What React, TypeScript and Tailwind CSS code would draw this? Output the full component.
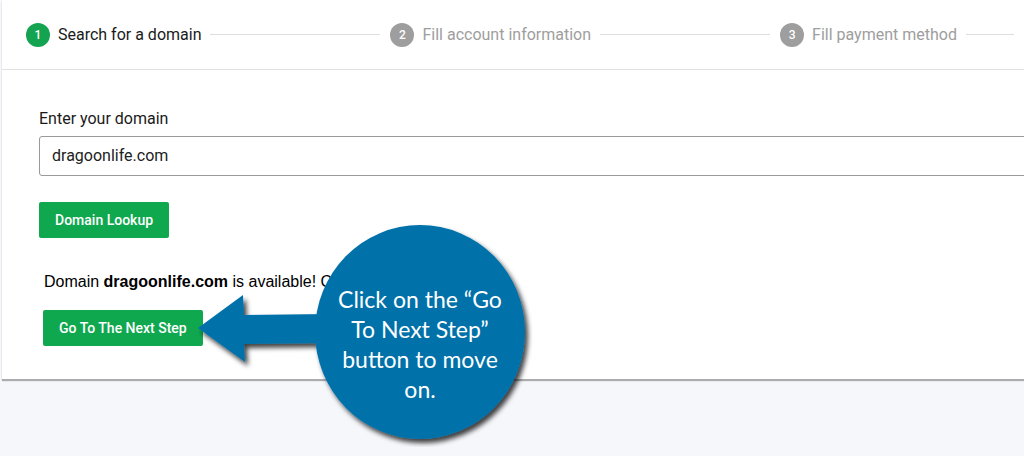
import React from "react";

const steps = [
  { n: 1, label: "Search for a domain", active: true },
  { n: 2, label: "Fill account information", active: false },
  { n: 3, label: "Fill payment method", active: false },
];

function Stepper() {
  return (
    <div className="flex h-[70px] items-center border-b border-[#e2e2e2] pl-[24px]">
      {steps.map((s, i) => (
        <div key={s.n} className={"flex items-center " + (i < steps.length - 1 ? "" : "flex-1")}>
          <span
            className={
              "flex h-[24px] w-[24px] items-center justify-center rounded-full text-[12px] font-medium text-white " +
              (s.active ? "bg-[#14a350]" : "bg-[#9e9e9e]")
            }
          >
            {s.n}
          </span>
          <span className={"ml-[8px] text-[16px] " + (s.active ? "text-[#1a1a1a]" : "text-[#9e9e9e]")}>{s.label}</span>
          <span className={"ml-[9px] mr-[10px] h-px bg-[#dedede] " + (i < steps.length - 1 ? "w-[170px]" : "flex-1 mr-0")} />
        </div>
      ))}
    </div>
  );
}

function Callout() {
  return (
    <div className="pointer-events-none absolute left-[190px] top-[222px] h-[225px] w-[345px]">
      <svg width="345" height="225" className="absolute left-0 top-0" viewBox="0 0 345 225">
        <defs>
          <filter id="sh" x="-20%" y="-20%" width="150%" height="150%">
            <feDropShadow dx="3" dy="4" stdDeviation="2.5" floodColor="#000" floodOpacity="0.75" />
          </filter>
        </defs>
        <g filter="url(#sh)">
          <path d="M8 106 L53 73 L54 93 L140 92 L140 121 L54 122 L55 140 Z" fill="#0071a9" />
          <ellipse cx="230" cy="110" rx="105" ry="107" fill="#0071a9" />
        </g>
      </svg>
      <div className="absolute left-[125px] top-[62px] w-[210px] text-center font-['Lato','Open_Sans',sans-serif] text-[23px] leading-[30px] text-white">
        Click on the “Go
        <br />
        To Next Step”
        <br />
        button to move
        <br />
        on.
      </div>
    </div>
  );
}

export default function App() {
  return (
    <div className="relative h-[456px] w-[1024px] overflow-hidden bg-[#f6f7fb] font-['Roboto',sans-serif]">
      <div className="ml-[2px] h-[379px] bg-white shadow-[0_2px_1px_rgba(0,0,0,0.3)]">
        <Stepper />
        <div className="pl-[37px] pt-[37px]">
          <label className="block text-[16px] leading-[24px] text-[#1a1a1a]">Enter your domain</label>
          <div className="mt-[5px] flex h-[40px] w-[1000px] items-center rounded-[3px] border border-[#9a9a9a] pl-[12px] text-[16px] text-[#222]">
            dragoonlife.com
          </div>
          <button className="mt-[26px] h-[36px] rounded-[2px] bg-[#10a84f] px-[16px] text-[14px] font-medium text-white">
            Domain Lookup
          </button>
          <p className="mt-[32px] pl-[5px] font-['Liberation_Sans',Arial,sans-serif] text-[16px] text-black">
            Domain <b>dragoonlife.com</b> is available! Continue.
          </p>
          <button className="ml-[4px] mt-[16px] h-[36px] rounded-[2px] bg-[#10a84f] px-[16px] text-[14px] font-medium text-white">
            Go To The Next Step
          </button>
        </div>
      </div>
      <Callout />
    </div>
  );
}
